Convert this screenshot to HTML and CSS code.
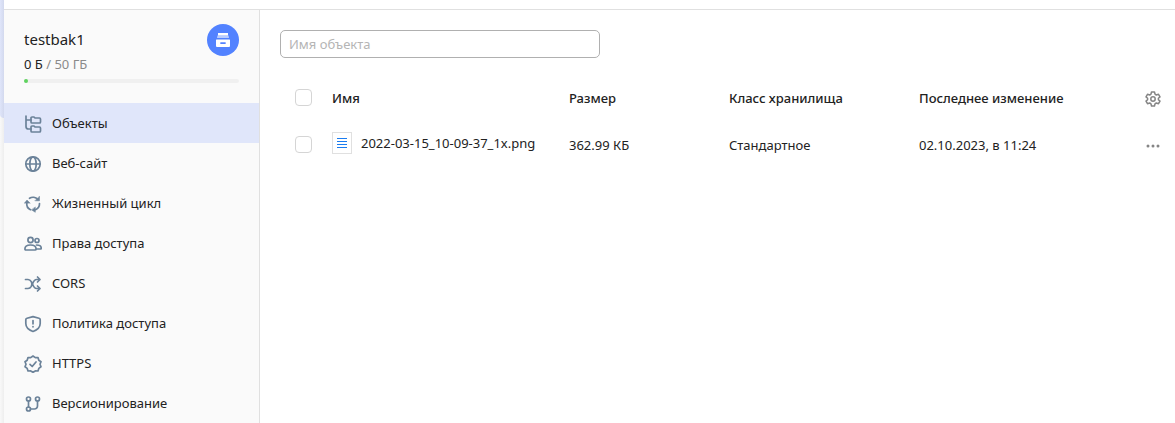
FILE: index.html
```html
<!DOCTYPE html>
<html lang="ru">
<head>
    <meta charset="UTF-8">
    <meta name="viewport" content="width=device-width, initial-scale=1.0">
    <title>testbak1</title>
    <link rel="stylesheet" href="styles.css">
</head>
<body>
    <div class="rail">
        <div class="rail-active"></div>
    </div>

    <div class="page">
        <header class="topbar"></header>

        <div class="content">
            <aside class="sidebar">
                <div class="bucket">
                    <div class="bucket-row">
                        <div>
                            <h1 class="bucket-name">testbak1</h1>
                            <p class="bucket-size">0 Б <span>/ 50 ГБ</span></p>
                        </div>
                        <div class="bucket-logo">
                            <svg width="16" height="16" viewBox="0 0 16 16" fill="#fff">
                                <path d="M3 1h10v2.500H3z"/>
                                <path d="M2.500 3.500h11l.5 2.500H2z" opacity=".6"/>
                                <path fill-rule="evenodd" d="M1.500 7.500h13a.5.5 0 0 1 .5.500v6a1 1 0 0 1-1 1H2a1 1 0 0 1-1-1V8a.5.500 0 0 1 .5-.5zM6 10.200a.9.9 0 0 0 0 1.800h4a.9.900 0 0 0 0-1.800z"/>
                            </svg>
                        </div>
                    </div>
                    <div class="quota"><div class="quota-used"></div></div>
                </div>

                <nav class="menu">
                    <a href="#" class="menu-item active">
                        <svg class="icon" viewBox="0 0 18 18">
                            <path d="M2 1v10.500a2.500 2.500 0 0 0 2.500 2.500H7M2 5h5"/>
                            <path d="M7 3a1 1 0 0 1 1-1h2l1 1h4.500a1 1 0 0 1 1 1v3a1 1 0 0 1-1 1H8a1 1 0 0 1-1-1z"/>
                            <path d="M7 12a1 1 0 0 1 1-1h2l1 1h4.500a1 1 0 0 1 1 1v3a1 1 0 0 1-1 1H8a1 1 0 0 1-1-1z"/>
                        </svg>
                        Объекты
                    </a>
                    <a href="#" class="menu-item">
                        <svg class="icon" viewBox="0 0 18 18">
                            <circle cx="9" cy="9" r="7.200"/>
                            <ellipse cx="9" cy="9" rx="3.200" ry="7.200"/>
                            <path d="M2 9h14"/>
                        </svg>
                        Веб-сайт
                    </a>
                    <a href="#" class="menu-item">
                        <svg class="icon" viewBox="0 0 18 18">
                            <path d="M5.500 3.300a6.500 6.500 0 0 1 8.300 1.200M15.500 8.500a6.500 6.500 0 0 1-4 6.200M6.500 14.700A6.500 6.500 0 0 1 2.800 8"/>
                            <path d="M15.500 1.500v4.300h-4.300zM11.300 12.300v5l-3.600-2.300zM.5 8L3 5l3 3z" fill="currentColor" stroke-width="0.500"/>
                        </svg>
                        Жизненный цикл
                    </a>
                    <a href="#" class="menu-item">
                        <svg class="icon" viewBox="0 0 18 18">
                            <circle cx="6.500" cy="5" r="2.600"/>
                            <circle cx="13" cy="5.500" r="2"/>
                            <path d="M.9 14c0-2.500 2.300-4 5.600-4s5.600 1.500 5.600 4c0 .7-.5 1-1.100 1H2c-.6 0-1.100-.3-1.100-1z"/>
                            <path d="M12.500 10c2.700 0 4.700 1.200 4.700 3.100 0 .6-.4.900-1 .9h-3.700"/>
                        </svg>
                        Права доступа
                    </a>
                    <a href="#" class="menu-item">
                        <svg class="icon" viewBox="0 0 18 18">
                            <path d="M1.500 4.500H4c1.500 0 2.500.8 3.300 2.200C8 8 8 10 7.300 11.300 6.500 12.700 5.500 13.500 4 13.500H1.500M8.500 9c.9 2.500 2 4.500 4.100 4.500H16M8.500 9c.9-2.500 2-4.500 4.100-4.500H16M13.500 2L16 4.500 13.500 7M13.500 11l2.500 2.500-2.500 2.500"/>
                        </svg>
                        CORS
                    </a>
                    <a href="#" class="menu-item">
                        <svg class="icon" viewBox="0 0 18 18">
                            <path d="M9 1.600l6 1.700c.7.200 1.200.8 1.200 1.500v3.700c0 3.600-3.400 6.600-7.200 8-3.800-1.400-7.200-4.400-7.200-8V4.800c0-.7.5-1.300 1.200-1.500z"/>
                            <path d="M9 5.500v3.300M9 11.600v.2"/>
                        </svg>
                        Политика доступа
                    </a>
                    <a href="#" class="menu-item">
                        <svg class="icon" viewBox="0 0 18 18">
                            <path d="M9 1l2.300 1.600 2.700-.1.800 2.700 2.200 1.600L16 9.300l1 2.500-2.200 1.600-.8 2.600-2.700-.1L9 17.300l-2.300-1.400-2.700.1-.8-2.600L1 11.800l1-2.500-1-2.500 2.200-1.600.8-2.700 2.700.1z"/>
                            <path d="M6 9.300l2.200 2.200L12 7"/>
                        </svg>
                        HTTPS
                    </a>
                    <a href="#" class="menu-item">
                        <svg class="icon" viewBox="0 0 18 18">
                            <circle cx="4.500" cy="4" r="2"/>
                            <circle cx="4.500" cy="14" r="2"/>
                            <circle cx="13.500" cy="4" r="2"/>
                            <path d="M4.500 6v6M6.500 14h4a3 3 0 0 0 3-3V6"/>
                        </svg>
                        Версионирование
                    </a>
                </nav>
            </aside>

            <main class="main">
                <input type="text" class="search" placeholder="Имя объекта" aria-label="Имя объекта">

                <table class="objects">
                    <thead>
                        <tr>
                            <th class="col-check"><input type="checkbox" class="checkbox" aria-label="Выбрать все"></th>
                            <th>Имя</th>
                            <th class="col-size">Размер</th>
                            <th class="col-class">Класс хранилища</th>
                            <th class="col-date">Последнее изменение</th>
                            <th class="col-actions">
                                <button class="icon-btn" aria-label="Настройки">
                                    <svg width="16" height="16" viewBox="0 0 16 16" fill="none" stroke="currentColor" stroke-width="1.500" stroke-linejoin="round">
                                        <path d="M6.500 1h3l.5 2.200 1.300.8 2.200-.7 1.500 2.600L13.400 7.300v1.400l1.600 1.400-1.500 2.600-2.200-.7-1.300.8-.5 2.200h-3L6 12.800 4.700 12l-2.200.7L1 10.100l1.600-1.400V7.300L1 5.900l1.500-2.600 2.200.7L6 3.200z"/>
                                        <circle cx="8" cy="8" r="2.200"/>
                                    </svg>
                                </button>
                            </th>
                        </tr>
                    </thead>
                    <tbody>
                        <tr>
                            <td class="col-check"><input type="checkbox" class="checkbox" aria-label="Выбрать объект"></td>
                            <td>
                                <a href="#" class="file">
                                    <span class="file-icon">
                                        <svg width="10" height="10" viewBox="0 0 10 10" stroke="#1a7cf0">
                                            <path d="M0 .5h10M0 3.500h10M0 6.500h10M0 9.500h10"/>
                                        </svg>
                                    </span>
                                    2022-03-15_10-09-37_1x.png
                                </a>
                            </td>
                            <td>362.99 КБ</td>
                            <td>Стандартное</td>
                            <td>02.10.2023, в 11:24</td>
                            <td class="col-actions">
                                <button class="icon-btn" aria-label="Действия">
                                    <svg width="16" height="16" viewBox="0 0 16 16" fill="currentColor">
                                        <circle cx="3" cy="8" r="1.500"/>
                                        <circle cx="8" cy="8" r="1.500"/>
                                        <circle cx="13" cy="8" r="1.500"/>
                                    </svg>
                                </button>
                            </td>
                        </tr>
                    </tbody>
                </table>
            </main>
        </div>
    </div>
</body>
</html>
```
FILE: styles.css
```css
:root {
    --text: #222;
    --muted: #8a8a8a;
    --line: #e0e0e0;
    --icon: #6b8299;
    --active: #e0e6fa;
    --blue: #5282ff;
    --green: #5fd35f;
}

* {
    box-sizing: border-box;
    margin: 0;
    padding: 0;
}

body {
    display: flex;
    min-height: 100vh;
    background: #fff;
    color: var(--text);
    font-family: "Noto Sans", "Open Sans", sans-serif;
    font-size: 13px;
    line-height: 20px;
}

a {
    color: inherit;
    text-decoration: none;
}

.rail {
    width: 4px;
    background: linear-gradient(to right, #f9f9f9, #eee);
}

.rail-active {
    height: 118px;
    background: linear-gradient(to right, #dfe5fa, #d3d9ee);
    border-bottom-left-radius: 4px;
}

.page {
    flex: 1;
    display: flex;
    flex-direction: column;
}

.topbar {
    height: 10px;
    border-bottom: 1px solid var(--line);
}

.content {
    flex: 1;
    display: flex;
}

.sidebar {
    width: 256px;
    background: #fafafa;
    border-right: 1px solid var(--line);
}

.bucket {
    padding: 14px 20px 20px;
}

.bucket-row {
    display: flex;
    justify-content: space-between;
    margin-bottom: 5px;
}

.bucket-name {
    margin: 5px 0;
    font-size: 15px;
    font-weight: 400;
}

.bucket-size span {
    color: var(--muted);
}

.bucket-logo {
    display: flex;
    align-items: center;
    justify-content: center;
    width: 32px;
    height: 32px;
    border-radius: 50%;
    background: var(--blue);
}

.quota {
    height: 4px;
    border-radius: 2px;
    background: #f0f0f0;
}

.quota-used {
    width: 4px;
    height: 4px;
    border-radius: 2px;
    background: var(--green);
}

.menu-item {
    display: flex;
    align-items: center;
    gap: 10px;
    height: 40px;
    padding: 0 20px;
}

.menu-item.active {
    background: var(--active);
}

.icon {
    width: 18px;
    height: 18px;
    margin-top: 2px;
    color: var(--icon);
    fill: none;
    stroke: currentColor;
    stroke-width: 1.7;
    stroke-linecap: round;
    stroke-linejoin: round;
}

.main {
    flex: 1;
    padding: 20px 4px 0 20px;
}

.search {
    display: block;
    width: 320px;
    height: 28px;
    padding: 0 8px;
    border: 1px solid #b0b0b0;
    border-radius: 5px;
    font: inherit;
}

.search::placeholder {
    color: #b5b5b5;
}

.objects {
    width: 100%;
    margin-top: 16px;
    border-collapse: collapse;
    table-layout: fixed;
}

.objects th,
.objects td {
    height: 47px;
    padding: 0 10px;
    text-align: left;
    vertical-align: middle;
    white-space: nowrap;
}

.objects th {
    font-weight: 500;
}

.objects .col-check {
    width: 42px;
    padding: 0 0 0 15px;
}

.col-size {
    width: 160px;
}

.col-class {
    width: 190px;
}

.col-date {
    width: 226px;
}

.objects .col-actions {
    width: 36px;
}

.checkbox {
    display: block;
    width: 17px;
    height: 17px;
    appearance: none;
    border: 1px solid #d5d5d5;
    border-radius: 4px;
    background: #fff;
}

.file {
    display: flex;
    align-items: center;
    gap: 9px;
    margin-bottom: 4px;
}

.file-icon {
    display: flex;
    align-items: center;
    justify-content: center;
    width: 20px;
    height: 22px;
    border: 1px solid var(--line);
}

.icon-btn {
    display: block;
    width: 16px;
    height: 16px;
    margin-top: 2px;
    border: none;
    background: none;
    color: #858585;
    cursor: pointer;
}
```
